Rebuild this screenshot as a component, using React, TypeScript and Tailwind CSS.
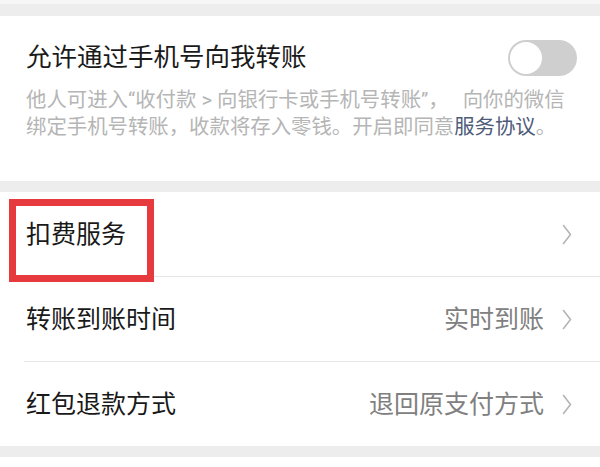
import React from "react";

function Chevron() {
  return (
    <svg width="10" height="21" viewBox="0 0 10 21" fill="none" className="shrink-0">
      <polyline points="1.5,1.5 8.5,10.5 1.5,19.5" stroke="#b4b4b4" strokeWidth="1.6" fill="none" strokeLinejoin="round" strokeLinecap="round" />
    </svg>
  );
}

function Row({ label, value }: { label: string; value?: string }) {
  return (
    <div className="h-[84px] flex items-center justify-between pl-[26px] pr-[28px]">
      <span className="text-[25px] leading-none text-[#191919]">{label}</span>
      <div className="flex items-center gap-[18px]">
        {value ? <span className="text-[25px] leading-none text-[#808080]">{value}</span> : null}
        <Chevron />
      </div>
    </div>
  );
}

export default function App() {
  return (
    <div
      className="relative w-[600px] h-[467px] overflow-hidden bg-[#ededed] flex flex-col"
      style={{ fontFamily: '"Roboto", "Noto Sans CJK SC", sans-serif' }}
    >
      <div className="h-[4px] bg-[#f6f6f6] shrink-0" />
      <div className="h-[12px] shrink-0" />
      <div className="h-[165px] bg-white shrink-0 pl-[26px] pr-[23px]">
        <div className="mt-[24px] h-[36px] flex items-center justify-between">
          <span className="text-[25.5px] leading-none text-[#1a1a1a]">允许通过手机号向我转账</span>
          <div className="w-[69px] h-[36px] rounded-full bg-[#cfcfcf] p-[2px] flex items-center">
            <div className="w-[32px] h-[32px] rounded-full bg-white" />
          </div>
        </div>
        <div className="mt-[11px] text-[20.4px] leading-[27px] text-[#b5b5b5] whitespace-nowrap">
          他人可进入“收付款 &gt; 向银行卡或手机号转账”，<span className="inline-block w-[14px]" />向你的微信
          <br />
          绑定手机号转账，收款将存入零钱。开启即同意<span className="text-[#4d5a78]">服务协议</span>。
        </div>
      </div>
      <div className="h-[11px] shrink-0" />
      <div className="bg-white shrink-0">
        <Row label="扣费服务" />
        <div className="ml-[24px] h-px bg-[#e6e6e6]" />
        <Row label="转账到账时间" value="实时到账" />
        <div className="ml-[24px] h-px bg-[#e6e6e6]" />
        <Row label="红包退款方式" value="退回原支付方式" />
      </div>
      <div className="h-[11px] shrink-0" />
      <div className="flex-1 bg-white" />
      <div className="absolute left-[9px] top-[199px] w-[145px] h-[83px] border-[7px] border-[#e63a3f]" />
    </div>
  );
}
